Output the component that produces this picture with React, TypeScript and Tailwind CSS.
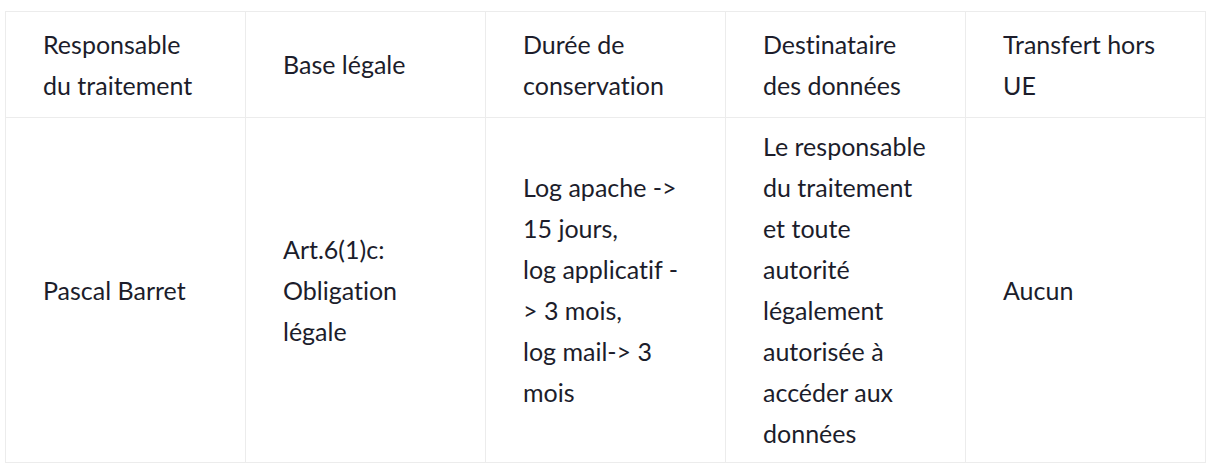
const headers = [
  ['Responsable', 'du traitement'],
  ['Base légale'],
  ['Durée de', 'conservation'],
  ['Destinataire', 'des données'],
  ['Transfert hors', 'UE'],
]

const row = [
  ['Pascal Barret'],
  ['Art.6(1)c:', 'Obligation', 'légale'],
  ['Log apache ->', '15 jours,', 'log applicatif -', '> 3 mois,', 'log mail-> 3', 'mois'],
  [
    'Le responsable',
    'du traitement',
    'et toute',
    'autorité',
    'légalement',
    'autorisée à',
    'accéder aux',
    'données',
  ],
  ['Aucun'],
]

const Lines = ({ lines }: { lines: string[] }) => (
  <>
    {lines.map((line, i) => (
      <div key={i} className="whitespace-nowrap">
        {line}
      </div>
    ))}
  </>
)

export default function App() {
  return (
    <div
      className="min-h-[472px] bg-white pl-[5px] pt-[11px] text-[#1c1d2b]"
      style={{ fontFamily: 'Lato, "Open Sans", sans-serif' }}
    >
      <table className="w-[1201px] table-fixed border-collapse text-[25px] font-normal leading-[41px] [font-variant-ligatures:none]">
        <thead>
          <tr className="h-[106px]">
            {headers.map((h, i) => (
              <th
                key={i}
                className="w-[240px] border border-[#ececec] pl-[37px] pr-2 text-left align-middle font-normal"
              >
                <Lines lines={h} />
              </th>
            ))}
          </tr>
        </thead>
        <tbody>
          <tr className="h-[345px]">
            {row.map((c, i) => (
              <td
                key={i}
                className="border border-[#ececec] pl-[37px] pr-2 align-middle"
              >
                <Lines lines={c} />
              </td>
            ))}
          </tr>
        </tbody>
      </table>
    </div>
  )
}
